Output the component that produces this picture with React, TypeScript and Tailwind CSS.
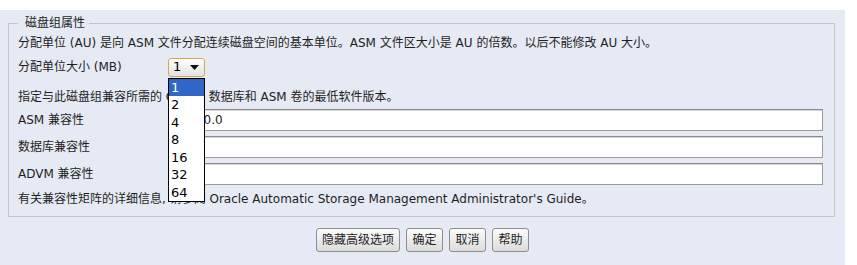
const SIZES = ['1', '2', '4', '8', '16', '32', '64']

const COMPAT_ROWS = [
  { label: 'ASM 兼容性', value: '11.2.0.0' },
  { label: '数据库兼容性', value: '' },
  { label: 'ADVM 兼容性', value: '' },
]

const BUTTONS = [
  { label: '隐藏高级选项', w: 'w-[84px]' },
  { label: '确定', w: 'w-[37px]' },
  { label: '取消', w: 'w-[37px]' },
  { label: '帮助', w: 'w-[37px]' },
]

function AuSelect() {
  return (
    <div className="relative">
      <div className="flex h-[19px] w-[37px] items-center justify-between rounded-[3px] border border-[#d9a84b] bg-linear-to-b from-white to-[#e2e2e2] pl-[4px] pr-[5px] text-[13px] text-black">
        <span>1</span>
        <svg width="9" height="5" viewBox="0 0 9 5">
          <path d="M0 0h9L4.5 5z" fill="#111" />
        </svg>
      </div>

      {/* Open list */}
      <div className="absolute left-0 top-[20px] z-10 w-[37px] border border-black bg-white">
        {SIZES.map((s, i) => (
          <div
            key={s}
            className={`h-[17.5px] pl-[2px] text-[13px] leading-[17.5px] ${
              i === 0 ? 'bg-[#3166c6] text-white' : 'text-black'
            }`}
          >
            {s}
          </div>
        ))}
      </div>
    </div>
  )
}

export default function App() {
  return (
    <div className="h-[265px] w-[857px] bg-white pt-[10px] font-['DejaVu_Sans','Noto_Sans_CJK_SC',sans-serif] text-[12px] text-[#1e1e1e]">
      <div className="h-[255px] w-[845px] overflow-hidden bg-[#e6eaf4] pt-[5px]">
        <fieldset className="ml-[8px] w-[827px] border border-[#c4c6c0] pb-[5px] pl-[9px] pr-[10px]">
          <legend className="pl-[7px] pr-[4px] leading-[16px]">磁盘组属性</legend>

          <div className="flex h-[24px] items-center">
            分配单位 (AU) 是向 ASM 文件分配连续磁盘空间的基本单位。ASM 文件区大小是 AU 的倍数。以后不能修改 AU 大小。
          </div>

          <div className="flex h-[24px] items-center">
            <span className="w-[150px]">分配单位大小 (MB)</span>
            <AuSelect />
          </div>

          <div className="flex h-[30px] items-center pt-[6px]">
            指定与此磁盘组兼容所需的 Oracle 数据库和 ASM 卷的最低软件版本。
          </div>

          {COMPAT_ROWS.map((r) => (
            <div key={r.label} className="mb-[5px] flex h-[22px] items-center">
              <span className="w-[150px]">{r.label}</span>
              <div className="flex h-[22px] w-[655px] items-center border border-[#9c9c9c] border-t-[#8a8a8a] bg-white pl-[4px] shadow-[inset_0_1px_0_#d6d6d6]">
                {r.value}
              </div>
            </div>
          ))}

          <div className="mt-[-3px] flex h-[24px] items-center">
            有关兼容性矩阵的详细信息, 请参阅 Oracle Automatic Storage Management Administrator's Guide。
          </div>
        </fieldset>

        <div className="mt-[11px] flex justify-center gap-[6px]">
          {BUTTONS.map((b) => (
            <button
              key={b.label}
              className={`h-[24px] ${b.w} rounded-[3px] border border-[#8e8e8e] bg-linear-to-b from-[#fbfbfb] to-[#dcdcdc] text-[12px] text-[#1e1e1e]`}
            >
              {b.label}
            </button>
          ))}
        </div>
      </div>
    </div>
  )
}
